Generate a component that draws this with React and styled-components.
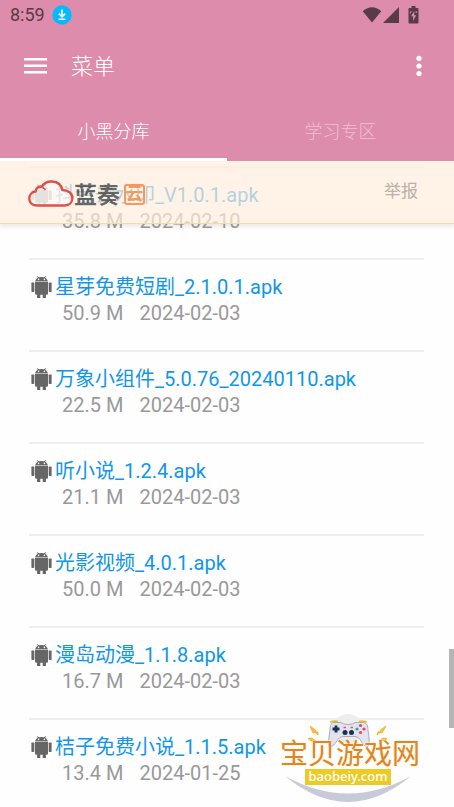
import styled, { createGlobalStyle } from "styled-components";
import { useState } from "react";

const GlobalStyle = createGlobalStyle`
    * {
        box-sizing: border-box;
    }
    body {
        margin: 0;
        background: #fefefe;
        font-family: Roboto, "Noto Sans CJK SC", sans-serif;
    }
    button {
        padding: 0;
        border: none;
        background: none;
        font: inherit;
        color: inherit;
    }
    svg {
        display: block;
    }
`;

const Screen = styled.div`
    display: flex;
    flex-direction: column;
    height: 100vh;
    overflow: hidden;
`;

const Header = styled.header`
    flex: none;
    background: #dd8cab;
    color: white;
`;

const StatusBar = styled.div`
    display: flex;
    align-items: center;
    height: 32px;
    padding: 0 35px 2px 10px;
    color: #593a47;
`;

const Clock = styled.time`
    font-size: 18px;
    line-height: 32px;
    margin-right: 7px;
`;

const StatusIcons = styled.div`
    display: flex;
    align-items: center;
    gap: 1px;
    margin-left: auto;

    svg:last-child {
        margin-left: 8px;
    }
`;

const Toolbar = styled.div`
    display: flex;
    align-items: center;
    height: 68px;
    padding: 0 32px 0 24px;
`;

const Title = styled.h1`
    flex: 1;
    margin: 0 0 0 24px;
    padding-top: 2px;
    font-size: 22px;
    line-height: 32px;
    font-weight: 300;
`;

const Tabs = styled.nav`
    display: flex;
`;

const Tab = styled.button`
    flex: 1;
    && {
        height: 61px;
        padding-top: 6px;
        border-bottom: 3px solid ${props => props.$active ? "white" : "transparent"};
        color: ${props => props.$active ? "white" : "#eec0d2"};
        font-size: 18px;
        line-height: 26px;
        font-weight: 300;
    }
`;

const Content = styled.main`
    position: relative;
    flex: 1;
    min-height: 0;
    overflow: hidden;
`;

const Notice = styled.div`
    position: absolute;
    top: 0;
    left: 0;
    right: 0;
    display: flex;
    align-items: center;
    justify-content: space-between;
    height: 63px;
    padding: 0 36px 2px 28px;
    background: rgba(255, 237, 220, 0.68);
    border-bottom: 1px solid #f3dca6;
    box-shadow: 0 2px 5px rgba(150, 120, 80, 0.2);
`;

const Brand = styled.div`
    display: flex;
    align-items: center;
    margin-top: 5px;
    color: rgba(50, 50, 50, 0.72);
    font-size: 23px;
    line-height: 28px;
    font-weight: 700;
`;

const BrandName = styled.span`
    padding-top: 4px;
`;

const BrandBox = styled.span`
    display: flex;
    align-items: center;
    justify-content: center;
    width: 21px;
    height: 21px;
    margin: 2px 0 0 4px;
    border: 2px solid #f49a5c;
    border-radius: 3px;
    color: #f49a5c;
    font-size: 17px;
    line-height: 17px;
`;

const Report = styled.button`
    && {
        color: #b9b1aa;
        font-size: 17px;
        line-height: 24px;
    }
`;

const FileList = styled.ul`
    list-style: none;
    margin: 0;
    padding: 5px 30px 0 29px;
`;

const FileRow = styled.li`
    height: 92px;
    padding: 14px 0 0 2px;
    border-top: 2px solid #efefef;
    font-size: 20px;
    line-height: 26px;
    white-space: nowrap;
`;

const FileLink = styled.a`
    display: flex;
    align-items: center;
    gap: 3px;
    color: #1296e8;
    text-decoration: none;
`;

const FileMeta = styled.div`
    display: flex;
    gap: 16px;
    padding-left: 31px;
    color: #999;
`;

const ScrollThumb = styled.div`
    position: absolute;
    right: 0;
    top: 75.5%;
    width: 5px;
    height: 79px;
    background: #b5b5b5;
`;

const Watermark = styled.div`
    position: absolute;
    right: 34px;
    bottom: 3px;
    display: flex;
    flex-direction: column;
    align-items: center;
    width: 140px;
    height: 90px;
    padding-top: 27px;
    pointer-events: none;

    svg {
        position: absolute;
        inset: 0;
    }
`;

const SiteName = styled.div`
    position: relative;
    color: #df8427;
    font-size: 28px;
    line-height: 28px;
    white-space: nowrap;
    text-shadow: 0 0 2px #fff3cf, 0 0 2px #fff3cf;
`;

const SiteUrl = styled.div`
    position: relative;
    width: 86px;
    height: 16px;
    margin-right: 4px;
    background: #eccb25;
    color: white;
    font-family: "Noto Sans", sans-serif;
    font-size: 13px;
    line-height: 15px;
    font-weight: 500;
    text-align: center;
`;

const tabs = ["小黑分库", "学习专区"];

const files = [
    { name: "抖音去水印_V1.0.1.apk", size: "35.8 M", date: "2024-02-10" },
    { name: "星芽免费短剧_2.1.0.1.apk", size: "50.9 M", date: "2024-02-03" },
    { name: "万象小组件_5.0.76_20240110.apk", size: "22.5 M", date: "2024-02-03" },
    { name: "听小说_1.2.4.apk", size: "21.1 M", date: "2024-02-03" },
    { name: "光影视频_4.0.1.apk", size: "50.0 M", date: "2024-02-03" },
    { name: "漫岛动漫_1.1.8.apk", size: "16.7 M", date: "2024-02-03" },
    { name: "桔子免费小说_1.1.5.apk", size: "13.4 M", date: "2024-01-25" },
];

const DownloadIcon = () => (
    <svg width="20" height="20" viewBox="0 0 20 20">
        <circle cx="10" cy="10" r="9.7" fill="#08b9fb" />
        <path d="M10 4.5v7M6.8 8.6l3.2 3.2 3.2-3.2M6.6 14.2h6.8" fill="none" stroke="white" strokeWidth="1.6" />
    </svg>
);

const WifiIcon = () => (
    <svg width="20" height="16" viewBox="0 0 20 16" fill="currentColor">
        <path d="M.7 4.3Q10-4 19.3 4.3L10 15.5z" />
    </svg>
);

const SignalIcon = () => (
    <svg width="16" height="16" viewBox="0 0 16 16" fill="currentColor">
        <path d="M16 0v16H0z" />
    </svg>
);

const BatteryIcon = () => (
    <svg width="11" height="18" viewBox="0 0 11 18" fill="currentColor">
        <path d="M3.5 0h4v2H9.5a1 1 0 0 1 1 1v13.5a1 1 0 0 1-1 1h-8a1 1 0 0 1-1-1V3a1 1 0 0 1 1-1h2z" />
        <path d="M6.3 5 3.1 10.3h2V15l3-5.7h-2z" fill="#dd8cab" />
        <path d="M2.2 7.5 3.2 5M8.2 5v2" stroke="#dd8cab" />
    </svg>
);

const MenuIcon = () => (
    <svg width="23" height="16" viewBox="0 0 23 16" fill="white">
        <path d="M0 0h23v2.5H0zM0 6.5h23V9H0zM0 13h23v2.5H0z" />
    </svg>
);

const MoreIcon = () => (
    <svg width="6" height="22" viewBox="0 0 6 22" fill="white">
        <circle cx="3" cy="3.3" r="2.6" />
        <circle cx="3" cy="11" r="2.6" />
        <circle cx="3" cy="18.6" r="2.6" />
    </svg>
);

const AndroidIcon = () => (
    <svg width="21" height="23" viewBox="0 0 21 23" fill="#666">
        <path d="M4.2 5.2C4.5 3.5 5.8 2.2 7 1.7L5.6.7l.6-.5L8 1.3q2.5-.5 5 0L14.8.2l.6.5L14 1.7c1.2.5 2.5 1.8 2.8 3.5z" />
        <circle cx="7.6" cy="3.4" r=".8" fill="white" />
        <circle cx="13.4" cy="3.4" r=".8" fill="white" />
        <path d="M4 5.7h13v11.8q0 1.2-1.2 1.2h-.9V22h-3.2v-3.3H9.3V22H6.1v-3.3h-.9Q4 18.7 4 17.5z" />
        <rect x=".4" y="6.5" width="2.9" height="9.5" rx=".7" />
        <rect x="17.7" y="6.5" width="2.9" height="9.5" rx=".7" />
    </svg>
);

const CloudIcon = () => (
    <svg width="46" height="28" viewBox="0 0 46 28">
        <path
            d="M9.5 25.5C4 25.5 1.3 22.5 1.3 18.7c0-4 2.7-6.8 6.3-7.2C8 8 10.5 6.3 13.7 6.8 16 2.8 20 1.2 24.4 1.5c5.3.4 9 3.6 10 8.5 5.7 0 10 3.3 10 8.1 0 4.5-3.2 7.4-7.6 7.4z"
            fill="rgba(255,255,255,.5)"
            stroke="#df504c"
            strokeWidth="2.4"
        />
        <path d="M14.5 7.5q2 .8 3 2.5" fill="none" stroke="#df504c" strokeWidth="1.5" />
    </svg>
);

const GamepadArt = () => (
    <svg width="140" height="90" viewBox="0 0 140 90">
        <circle cx="68" cy="15" r="15" fill="#ededed" />
        <path d="M5 62Q68 114 131 62 68 97 5 62z" fill="#c8cad9" />
        <path
            d="M54 8.5h7q2 2 7 2t7-2h7c5 0 6 3 6 8 1 6 2 12 0 16-4 1-6-4-8-7q-2-3-5-3H63q-3 0-5 3c-3 4-5 8-9 7-1-4 0-10 1-16 0-5 1-8 4-8z"
            fill="#e2e3ef"
            stroke="#a9abbe"
        />
        <path d="M50 8.5q2-2 8-1M79 7.5q6-1 8 1" fill="none" stroke="#e6b533" strokeWidth="1.6" />
        <path d="M56 11.5v7M52.5 15h7" stroke="#15354b" strokeWidth="2.8" />
        <circle cx="65" cy="18.5" r="2.5" fill="#15354b" />
        <circle cx="71.5" cy="18.5" r="2.5" fill="#15354b" />
        <path d="M63.5 13.5h2.5M70.5 13.5h2.5" stroke="#d75573" strokeWidth="1.5" />
        <circle cx="80.5" cy="11.5" r="1.6" fill="#e04b5b" />
        <circle cx="80.5" cy="18.5" r="1.6" fill="#e04b5b" />
        <circle cx="77" cy="15" r="1.6" fill="#2f9fbb" />
        <circle cx="84" cy="15" r="1.6" fill="#e04b5b" />
        <path
            d="m30 12 5.5 4-.5 1.5 3 .5v3l-3-2.5-2 .5zM106 12l-5.5 4 .5 1.5-3 .5-1 3 3-2.5 2 .5zM28 24.5l4-.5 4 3-3-.5-2 .5zM107 24.5l-4-.5-4 3 3-.5 2 .5z"
            fill="#f4c531"
            stroke="#efa928"
            strokeWidth=".8"
        />
    </svg>
);

const App = () => {
    const [activeTab, setActiveTab] = useState(tabs[0])

    return (
        <>
            <GlobalStyle />
            <Screen>
                <Header>
                    <StatusBar>
                        <Clock>8:59</Clock>
                        <DownloadIcon />
                        <StatusIcons>
                            <WifiIcon />
                            <SignalIcon />
                            <BatteryIcon />
                        </StatusIcons>
                    </StatusBar>
                    <Toolbar>
                        <button aria-label="菜单"><MenuIcon /></button>
                        <Title>菜单</Title>
                        <button aria-label="更多"><MoreIcon /></button>
                    </Toolbar>
                    <Tabs>
                        {tabs.map(tab => (
                            <Tab key={tab} $active={tab === activeTab} onClick={() => setActiveTab(tab)}>
                                {tab}
                            </Tab>
                        ))}
                    </Tabs>
                </Header>
                <Content>
                    <FileList>
                        {files.map(file => (
                            <FileRow key={file.name}>
                                <FileLink href="#">
                                    <AndroidIcon />
                                    {file.name}
                                </FileLink>
                                <FileMeta>
                                    <span>{file.size}</span>
                                    <span>{file.date}</span>
                                </FileMeta>
                            </FileRow>
                        ))}
                    </FileList>
                    <Notice>
                        <Brand>
                            <CloudIcon />
                            <BrandName>蓝奏</BrandName>
                            <BrandBox>云</BrandBox>
                        </Brand>
                        <Report>举报</Report>
                    </Notice>
                    <ScrollThumb />
                    <Watermark>
                        <GamepadArt />
                        <SiteName>宝贝游戏网</SiteName>
                        <SiteUrl>baobeiy.com</SiteUrl>
                    </Watermark>
                </Content>
            </Screen>
        </>
    )
}

export default App
